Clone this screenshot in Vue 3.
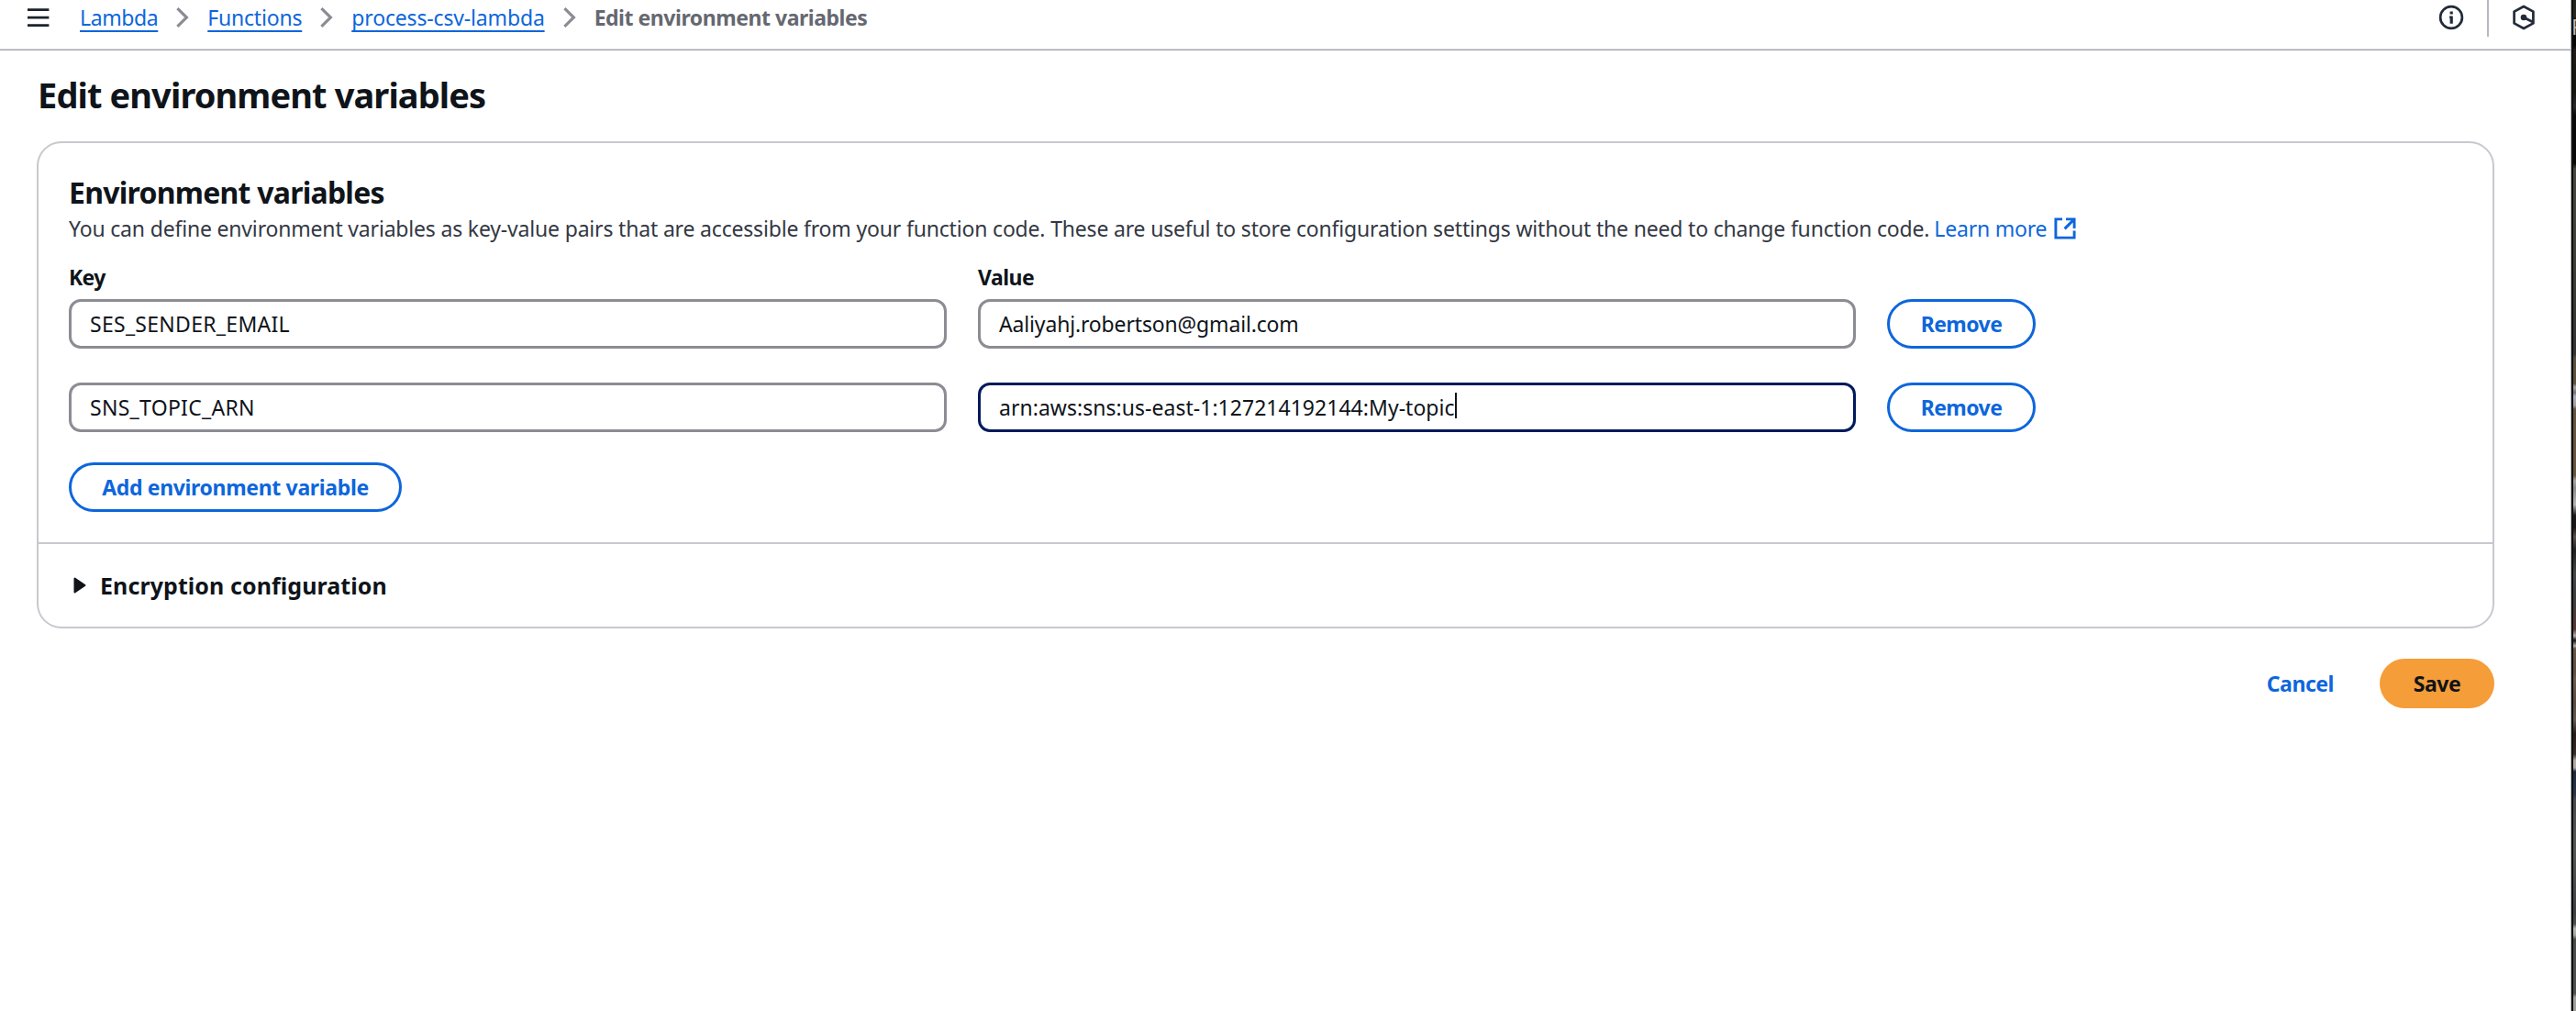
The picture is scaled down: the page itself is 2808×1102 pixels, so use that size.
<script setup>
import { ref } from 'vue'

const crumbs = [
  { text: 'Lambda', cls: 'c1' },
  { text: 'Functions', cls: 'c2' },
  { text: 'process-csv-lambda', cls: 'c3' },
]

const rows = ref([
  { key: 'SES_SENDER_EMAIL', value: 'Aaliyahj.robertson@gmail.com', focused: false },
  { key: 'SNS_TOPIC_ARN', value: 'arn:aws:sns:us-east-1:127214192144:My-topic', focused: true },
])
</script>

<template>
  <div class="screen">
    <div class="page">
      <header class="topbar">
        <svg class="menu" width="24" height="20" viewBox="0 0 24 20">
          <path d="M0 1.6h23.4M0 10.1h23.4M0 18.6h23.4" fill="none" stroke="#1b232d" stroke-width="2.8" />
        </svg>
        <nav class="crumbs">
          <template v-for="c in crumbs" :key="c.text">
            <a :class="['crumb', c.cls]">{{ c.text }}</a>
            <svg class="chev" width="14" height="22" viewBox="0 0 14 22">
              <path d="M1.4 1.2 11.4 11 1.4 20.8" fill="none" stroke="#8c8c94" stroke-width="3.2" />
            </svg>
          </template>
          <span class="current">Edit environment variables</span>
        </nav>
        <div class="tools">
          <svg class="info" width="28" height="28" viewBox="0 0 28 28">
            <circle cx="14" cy="14" r="11.9" fill="none" stroke="#232b3b" stroke-width="2.7" />
            <path d="M12.6 7.4h3.2v3.2h-3.2zM12 12.4h3.8v8.4h-3.2v-6h-.6z" fill="#232b3b" />
          </svg>
          <i class="sep"></i>
          <svg class="hexagon" width="26" height="28" viewBox="0 0 26 28">
            <path d="M13 2 23.4 7.6v12.8L13 26 2.6 20.4V7.6z" fill="none" stroke="#232b3b" stroke-width="2.7" stroke-linejoin="round" />
            <circle cx="13" cy="14" r="3.3" fill="#232b3b" />
            <path d="M13 14 23 19" stroke="#232b3b" stroke-width="2.7" />
          </svg>
        </div>
      </header>

      <main>
        <h1>Edit environment variables</h1>

        <section class="card">
          <div class="body">
            <h2>Environment variables</h2>
            <p class="desc">
              <span>You can define environment variables as key-value pairs that are accessible from your function code. These are useful to store configuration settings without the need to change function code.</span>
              <a class="learn">Learn more</a>
              <svg width="24" height="24" viewBox="0 0 24 24" fill="none" stroke="#0d66dc" stroke-width="2.9">
                <path d="M9 1.9H1.9v20.2h20.2V14.5" />
                <path d="M13 1.9h9.1V12M21.6 2.4 11.6 12.4" />
              </svg>
            </p>

            <div class="labels">
              <label class="key-label">Key</label>
              <label class="value-label">Value</label>
            </div>
            <div class="rows">
              <div v-for="(r, i) in rows" :key="r.key" class="row">
                <div class="field caps">{{ r.key }}</div>
                <div :class="['field', 'v' + i, { focused: r.focused }]">{{ r.value }}<i v-if="r.focused" class="caret"></i></div>
                <button class="btn remove">Remove</button>
              </div>
            </div>
            <button class="btn add">Add environment variable</button>
          </div>

          <div class="expander">
            <svg width="14" height="18" viewBox="0 0 14 18">
              <path d="M1.5 1.5v15L12.5 9z" fill="#0f141a" stroke="#0f141a" stroke-width="2" stroke-linejoin="round" />
            </svg>
            <span>Encryption configuration</span>
          </div>
        </section>

        <div class="actions">
          <a class="cancel">Cancel</a>
          <button class="save">Save</button>
        </div>
      </main>
    </div>
    <div class="edge"></div>
    <div class="backdrop"><span class="glyph">R</span></div>
  </div>
</template>

<style>
body { background: #fff; overflow: hidden; }
</style>

<style scoped>
* { box-sizing: border-box; }
.screen {
  display: flex;
  width: 2808px;
  height: 1102px;
  overflow: hidden;
  font-family: "Noto Sans", "Open Sans", sans-serif;
  font-size: 23px;
  color: #0f141a;
  background: #fff;
}
.page { width: 2803px; flex: none; border-right: 1px solid #b4b8b8; }
.topbar {
  display: flex;
  align-items: flex-start;
  height: 55px;
  border-bottom: 1px solid #a0a0aa;
  box-shadow: inset 0 -1px #d6d6dc;
  padding-left: 30px;
  margin-right: -1px;
}
.menu { margin: 9px 33px 0 0; flex: none; }
.crumbs { display: flex; flex: 1; line-height: 38px; white-space: nowrap; }
.crumb {
  color: #0d66dc;
  text-decoration: underline;
  text-decoration-thickness: 2px;
  text-underline-offset: 5px;
  text-decoration-skip-ink: none;
}
.c1 { letter-spacing: -.4px; }
.c2 { letter-spacing: -.2px; }
.c3 { letter-spacing: -.16px; }
.chev { margin: 8px 20px 0; flex: none; }
.current { font-weight: 700; color: #656871; letter-spacing: -.46px; }
.tools { display: flex; align-items: flex-start; width: 145px; }
.info { margin-top: 5px; }
.sep { width: 1.7px; height: 40px; background: #b8b8c0; margin: 0 25px 0 25px; }
.hexagon { margin-top: 5px; }

main { width: 2719px; padding-left: 40px; }
h1 {
  margin: 21px 0 24px;
  padding-left: 1px;
  font-size: 38px;
  line-height: 54px;
  font-weight: 700;
  letter-spacing: -.9px;
}
.card { border: 2px solid #c8c8ce; border-radius: 27px; height: 531px; }
.body { padding: 35px 34px 33px 33px; height: 435px; }
h2 { margin: 0; font-size: 32px; line-height: 38px; font-weight: 700; letter-spacing: -.76px; }
.desc {
  display: flex;
  align-items: center;
  margin: 3px 0 0;
  line-height: 34px;
  color: #424650;
  letter-spacing: -.18px;
  white-space: nowrap;
}
.desc span { color: #333843; }
.learn { color: #0d66dc; margin: 0 8px 0 5px; letter-spacing: -.2px; }
.labels {
  display: flex;
  gap: 34px;
  margin-top: 22px;
  line-height: 28px;
  font-weight: 700;
}
.labels label { width: 957px; }
.key-label { letter-spacing: -.7px; }
.value-label { letter-spacing: -.5px; }
.rows { display: flex; flex-direction: column; gap: 37px; margin-top: 10px; }
.row { display: flex; gap: 34px; }
.field {
  display: flex;
  align-items: center;
  width: 957px;
  height: 54px;
  padding-left: 20px;
  border: 3px solid #8c8c94;
  border-radius: 13px;
  letter-spacing: .03px;
}
.caps { letter-spacing: .28px; }
.v0 { letter-spacing: -.16px; }
.focused { border-color: #001a5c; }
.caret { width: 2px; height: 28px; background: #0f141a; margin-top: -4px; }
.btn {
  height: 54px;
  padding: 0;
  border: 3px solid #0d66dc;
  border-radius: 27px;
  background: #fff;
  color: #0d66dc;
  font: 700 23px "Noto Sans", "Open Sans", sans-serif;
}
.remove { width: 162px; letter-spacing: -.55px; }
.add { width: 363px; margin-top: 33px; display: block; letter-spacing: -.34px; }
.expander {
  display: flex;
  align-items: center;
  height: 92px;
  border-top: 2px solid #c8c8ce;
  padding-left: 38px;
  font-size: 25px;
  font-weight: 700;
  letter-spacing: .08px;
}
.expander span { margin-left: 15px; }
.actions {
  display: flex;
  justify-content: flex-end;
  align-items: center;
  margin-top: 33px;
  font-weight: 700;
}
.cancel { color: #0d66dc; letter-spacing: -.45px; margin-right: 50px; }
.save {
  width: 125px;
  height: 54px;
  padding: 0;
  border: 0;
  border-radius: 27px;
  background: #f59d38;
  color: #0f141a;
  font: 700 23px "Noto Sans", "Open Sans", sans-serif;
  letter-spacing: -.45px;
}
.edge { width: 2px; flex: none; background: #0c1010; }
.backdrop {
  width: 3px;
  flex: none;
  overflow: hidden;
  background: linear-gradient(
    #24221f 0, #2b2722 18px, #050505 24px, #080706 50px, #211c17 54px, #17130f 100px,
    #2c2926 116px, #0a0908 126px, #080706 178px, #4a463f 184px, #45423d 250px, #3a3835 340px,
    #363534 386px, #5a5042 390px, #60533f 418px, #aaa6a8 422px, #77737a 428px, #aeb0b8 432px, #a0a0a8 442px,
    #66553f 446px, #6b563e 518px, #a5a5a5 524px, #8c8c8c 532px, #b5b5b5 550px, #1c1716 562px, #1c1715 575px,
    #5a5350 585px, #241f1e 600px, #47484a 625px, #3e3f41 650px, #553a35 686px, #b0b0ac 693px,
    #161616 698px, #b4b4b0 704px, #66574a 707px, #5e5043 732px, #6e5a50 740px, #5b4c45 765px, #655a52 785px,
    #241d18 800px, #3a2d25 822px, #b0aca6 829px, #b0aca6 837px, #1f2b3d 841px, #283448 865px,
    #484b4c 872px, #555857 925px, #3f4242 995px, #4b4e4d 1007px, #b4b6b0 1012px, #a8aaa4 1019px, #4a4c49 1024px,
    #50514e 1083px, #a0a09c 1087px, #a0a09c 1102px
  );
}
.glyph {
  display: block;
  margin: 12px 0 0 -2px;
  font: 23px/34px "Noto Sans", sans-serif;
  color: #b8b8b8;
}
</style>
